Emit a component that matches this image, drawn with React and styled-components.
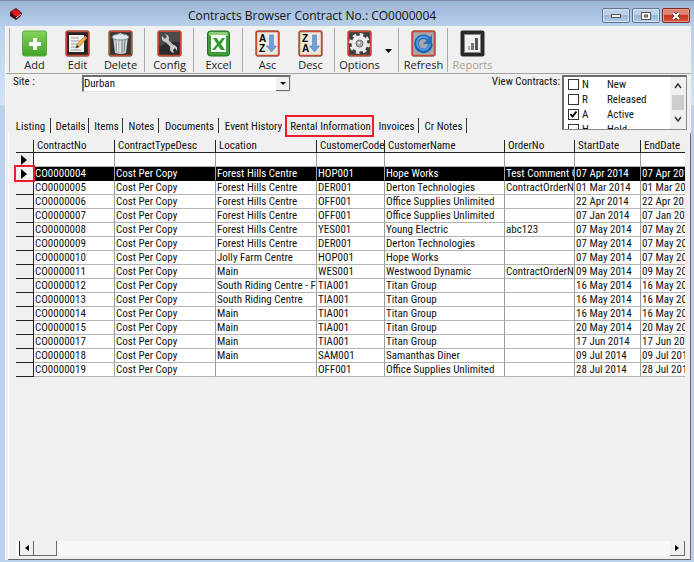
import React from 'react'
import styled, { createGlobalStyle, css } from 'styled-components'

const face = '#f0f0f0'
const uiFont = css`
  font-family: 'Roboto Condensed', 'Liberation Sans Narrow', 'Liberation Sans', sans-serif;
  font-size: 11px;
  line-height: 13px;
`
const captionFont = css`
  font-family: 'Open Sans', 'Noto Sans', sans-serif;
`

const GlobalStyle = createGlobalStyle`
  * {
    box-sizing: border-box;
  }

  body {
    margin: 0;
    color: #111;
    ${uiFont}
  }

  button, input, select {
    font: inherit;
    color: inherit;
    margin: 0;
    padding: 0;
    border: 0;
    background: none;
  }
`

const Window = styled.div`
  min-height: 100vh;
  display: flex;
  flex-direction: column;
  padding: 0 3px 2px 5px;
  background: linear-gradient(#9ab5d3, #bad1ec 26px, #d3e3f4 104px, #b9d1ea 105px);
  border-top: 1px solid #7c8da3;
`

const TitleBar = styled.header`
  height: 25px;
  display: flex;
  align-items: center;
  padding: 0 1px 0 5px;
`

const Title = styled.h1`
  ${captionFont}
  flex: 1;
  margin: 0;
  padding-top: 4px;
  text-align: center;
  font-size: 12px;
  font-weight: 400;
  line-height: 18px;
  white-space: nowrap;
`

const WindowButtons = styled.div`
  display: flex;
  gap: 2px;
  margin-top: 4px;
`

const WindowButton = styled.button`
  width: 28px;
  height: 15px;
  display: flex;
  align-items: center;
  justify-content: center;
  border: 1px solid ${({ $close }) => ($close ? '#7c2a22' : '#5f7590')};
  border-radius: 2px;
  box-shadow: inset 0 0 0 1px ${({ $close }) => ($close ? '#e59a8c' : '#d2e2f4')};
  background: ${({ $close }) => ($close
    ? 'linear-gradient(#dc8273 50%, #c2331f 50%, #d4553f)'
    : 'linear-gradient(#bdd2e9 50%, #98b5d5 50%, #b4cce6)')};
`

const Client = styled.main`
  flex: 1;
  display: flex;
  flex-direction: column;
  background: ${face};
  border-left: 1px solid #fff;
`

const Toolbar = styled.div`
  height: 48px;
  display: flex;
  align-items: center;
  padding-left: 1px;
  border-bottom: 1px solid #a2a2a2;
`

const Separator = styled.span`
  width: 1px;
  height: 44px;
  margin: 0 3px 0 2px;
  background: #a9a9a9;
`

const ToolButton = styled.button`
  ${captionFont}
  width: 43px;
  height: 44px;
  display: flex;
  flex-direction: column;
  align-items: center;
  justify-content: flex-end;
  font-size: 11px;
  line-height: 15px;
  color: ${({ disabled }) => (disabled ? '#a5a294' : '#222')};
  white-space: nowrap;
`

const DropButton = styled.button`
  width: 15px;
  height: 44px;
`

const Filters = styled.section`
  display: flex;
  align-items: stretch;
  height: 59px;
`

const FilterMain = styled.div`
  flex: 1;
  min-width: 0;
  display: flex;
  flex-direction: column;
  justify-content: space-between;
`

const SiteField = styled.label`
  display: flex;
  padding: 1px 0 0 7px;
`

const SiteLabel = styled.span`
  width: 69px;
`

const ComboFrame = styled.span`
  width: 209px;
  height: 17px;
  display: flex;
  background: #fff;
  border: 1px solid #e3e3e3;
  border-top: 2px solid #6d6d6d;
  border-left: 2px solid #6d6d6d;
`

const SiteSelect = styled.select`
  flex: 1;
  appearance: none;
  line-height: 12px;
  background:
    url("data:image/svg+xml,%3Csvg xmlns='http://www.w3.org/2000/svg' width='14' height='14'%3E%3Cpath d='M0 0h14v14H0z' fill='%23f0f0f0'/%3E%3Cpath d='M13.500 0v13.500H0' fill='none' stroke='%23666'/%3E%3Cpath d='M4 5h6L7 8z'/%3E%3C/svg%3E")
    no-repeat right top;
`

const TabStrip = styled.nav`
  display: flex;
  padding-left: 3px;
`

const Tab = styled.button`
  position: relative;
  width: ${({ $width }) => $width}px;
  height: 15px;
  padding: 1px 0 0 2px;
  white-space: nowrap;
  border-right: 1px solid #333;
`

const Highlight = styled.span`
  position: absolute;
  z-index: 1;
  inset: ${({ $inset }) => $inset};
  border: 2px solid #ec1c2c;
  pointer-events: none;
`

const StatusField = styled.div`
  display: flex;
  align-items: flex-start;
  gap: 2px;
  padding: 1px 4px 0 0;
`

const StatusList = styled.div`
  width: 125px;
  height: 55px;
  display: flex;
  background: #fff;
  border: 1px solid #8a8a8a;
  border-top: 2px solid #6d6d6d;
  border-left: 2px solid #6d6d6d;
`

const StatusItems = styled.div`
  flex: 1;
  overflow: hidden;
  padding-left: 4px;
`

const StatusItem = styled.label`
  height: 15px;
  display: flex;
  align-items: center;
`

const StatusCode = styled.span`
  width: 28px;
  padding-left: 3px;
`

const Check = styled.input`
  appearance: none;
  width: 11px;
  height: 11px;
  border: 1px solid #333;

  &:checked {
    background: url("data:image/svg+xml,%3Csvg xmlns='http://www.w3.org/2000/svg' width='9' height='9'%3E%3Cpath d='M1.500 4l2 2.500 4-5' fill='none' stroke='%23000' stroke-width='2'/%3E%3C/svg%3E");
  }
`

const ListScroll = styled.div`
  width: 16px;
  display: flex;
  flex-direction: column;
  align-items: center;
  background: ${face};
`

const ListThumb = styled.span`
  width: 12px;
  height: 15px;
  background: #cdcdcd;
`

const ScrollArrow = styled.button`
  width: 14px;
  height: 18px;
  display: flex;
  align-items: center;
  justify-content: center;
`

const TabPanel = styled.section`
  flex: 1;
  display: flex;
  flex-direction: column;
  margin-left: 2px;
  padding: 7px 5px 3px;
  border: 1px solid #6a6a6a;
  border-width: 0 1px 1px 0;
  box-shadow: inset 1px 0 #fff;
`

const Grid = styled.div`
  flex: 1;
  overflow: hidden;
  padding-left: 3px;
`

const Table = styled.table`
  width: 100%;
  table-layout: fixed;
  border-collapse: separate;
  border-spacing: 0;
`

const HeadCell = styled.th`
  height: 13px;
  padding: 0 0 0 3px;
  text-align: left;
  font-weight: 400;
  line-height: 12px;
  border-right: 1px solid #222;
  border-bottom: 1px solid #222;
  overflow: hidden;
  white-space: nowrap;

  &:last-child {
    border-right: 0;
  }
`

const Cell = styled.td`
  height: 14px;
  padding: 0 0 0 1px;
  line-height: 13px;
  color: ${({ $selected }) => ($selected ? '#fff' : '#111')};
  background: ${({ $selected }) => ($selected ? '#000' : '#fff')};
  border-right: 1px solid #9c9c9c;
  border-bottom: 1px solid ${({ $selected }) => ($selected ? '#000' : '#b4b4b4')};
  overflow: hidden;
  white-space: nowrap;

  &:last-child {
    border-right: 0;
  }
`

const Selector = styled.td`
  position: relative;
  height: 14px;
  padding: 0 0 0 5px;
  line-height: 0;
  background: ${face};
  border-right: 1px solid #222;
  border-bottom: 1px solid #222;
`

const ScrollBar = styled.div`
  height: 15px;
  display: flex;
  margin-left: 3px;
  padding-left: 3px;
  background: #f8f8f8;
`

const ScrollButton = styled.button`
  width: ${({ $wide }) => ($wide ? 23 : 15)}px;
  display: flex;
  align-items: center;
  justify-content: center;
  background: ${face};
  border: 1px solid #6a6a6a;
  border-width: 0 1px 1px 0;

  &:first-child {
    border-left: 1px solid #222;
  }

  &:last-child {
    margin-left: auto;
  }
`

const Icon = ({ children }) => (
  <svg width="25" height="27" viewBox="0 0 25 27" aria-hidden="true">
    {children}
  </svg>
)

const Framed = ({ fill, children }) => (
  <Icon>
    <rect x="0.5" y="0.5" width="24" height="26" rx="2" fill="#5d2a1e" />
    <rect x="1.500" y="1.500" width="22" height="24" rx="1" fill={fill} stroke="#c44a30" strokeWidth="1.400" />
    {children}
  </Icon>
)

const AddIcon = () => (
  <Icon>
    <defs>
      <linearGradient id="addFill" x2="0" y2="1">
        <stop offset="0" stopColor="#86d25b" />
        <stop offset="1" stopColor="#42a32c" />
      </linearGradient>
    </defs>
    <rect x="0.5" y="1" width="24" height="25" rx="2" fill="url(#addFill)" stroke="#58ad3f" />
    <path d="M11 8h4v4h4v4h-4v4h-4v-4H7v-4h4z" fill="#fff" />
  </Icon>
)

const EditIcon = () => (
  <Framed fill="#242424">
    <path d="M4 5h15v17H4z" fill="#f1f1ee" />
    <path d="M6 8h8M6 11h9M6 14h6M6 17h5M6 20h10" stroke="#9c9c9c" />
    <path d="M11 18l1-4 8-8 2 2-8 9z" fill="#efb54d" stroke="#7d5a28" strokeWidth="0.5" />
    <path d="M11 18l1-3 2 2z" fill="#222" />
    <path d="M19 7l1-1 2 2-1 1z" fill="#e07a6b" />
  </Framed>
)

const DeleteIcon = () => (
  <Framed fill="#343434">
    <path d="M5 7h15l-2 16q-5 2-11 0z" fill="#c6ced1" />
    <path d="M8 9l1 13M11 10v13M14 10v13M17 9l-1 13" stroke="#7d898e" />
    <path d="M9 9l1 13M12 10v13" stroke="#f6f9fa" />
    <ellipse cx="12.500" cy="7" rx="8.500" ry="3" fill="#e4eaec" stroke="#7d898d" />
    <path d="M10 5q2-3 5 0" fill="none" stroke="#e8eeee" />
  </Framed>
)

const ConfigIcon = () => (
  <Framed fill="#2b2b2d">
    <path d="M2 2h21v10Q10 11 2 17z" fill="#4a4a4d" />
    <path d="M8 9l9 9" stroke="#bfc3c7" strokeWidth="3.500" />
    <path d="M5 6q-1 5 3 6 4 0 4-4 0-3-4-4l2 3-2 2zM20 21q1-5-3-6-4 0-4 4 0 3 4 4l-1-3 2-2z" fill="#c9cccf" />
  </Framed>
)

const ExcelIcon = () => (
  <Icon>
    <rect x="1.500" y="1" width="22" height="25" rx="3" fill="#3f9a3a" stroke="#1f6e24" />
    <rect x="3" y="2" width="19" height="4" rx="1" fill="#8ccf78" />
    <rect x="5" y="5" width="15" height="17" fill="#f6faf4" />
    <path d="M7 8h4l2 4 3-4h3l-4 6 4 6h-4l-3-4-3 4H6l5-6z" fill="#2f9a30" />
  </Icon>
)

const SortIcon = ({ first, second }) => (
  <Framed fill="#ece8dc">
    <text x="4" y="12" fontFamily="Liberation Sans" fontWeight="700" fontSize="10">{first}</text>
    <text x="4" y="22" fontFamily="Liberation Sans" fontWeight="700" fontSize="10">{second}</text>
    <path d="M14.500 5h4v11h3l-5 6-5-6h3z" fill="#6c9fdc" stroke="#4677ba" strokeWidth="0.500" />
  </Framed>
)

const OptionsIcon = () => (
  <Framed fill="#3d3f40">
    <g fill="none" stroke="#e9ebeb">
      <circle cx="12.500" cy="13.500" r="5.500" strokeWidth="5" />
      <circle cx="12.500" cy="13.500" r="9" strokeWidth="3" strokeDasharray="3.534 3.534" />
    </g>
    <circle cx="12.500" cy="13.500" r="3.500" fill="#a3a8aa" stroke="#6e7376" />
    <circle cx="12" cy="13" r="1.200" fill="#eee" />
  </Framed>
)

const RefreshIcon = () => (
  <Framed fill="#a7a8ad">
    <path d="M18 9.500A7 7 0 1 0 19.500 14" fill="none" stroke="#1d62b2" strokeWidth="4.500" />
    <path d="M17.500 9A6.500 6.500 0 1 0 19 14" fill="none" stroke="#4f9be4" strokeWidth="2" />
    <path d="M21 5v9h-9z" fill="#2770c0" />
  </Framed>
)

const ReportsIcon = () => (
  <Icon>
    <rect x="0.500" y="0.500" width="24" height="26" rx="2" fill="#292929" />
    <rect x="4.500" y="4.500" width="16" height="18" fill="#f2f2f2" stroke="#888" />
    <path d="M8 16h2v4H8z" fill="#aaa" />
    <path d="M11 13h3v7h-3z" fill="#777" />
    <path d="M15 8h3v12h-3z" fill="#555" />
  </Icon>
)

const AppIcon = () => (
  <svg width="12" height="12" viewBox="0 0 12 12" aria-hidden="true">
    <path d="M0 4l6-4 6 5-1 3-5 4-6-4z" fill="#3c1014" />
    <path d="M1 4l5-3 5 4-5 4z" fill="#e5161d" />
    <path d="M6 10l5-4" stroke="#ddd" />
  </svg>
)

const Pointer = () => (
  <svg width="6" height="10" viewBox="0 0 6 10" aria-hidden="true"><path d="M0 0l6 5-6 5z" /></svg>
)

const Chevron = ({ up }) => (
  <svg width="8" height="6" viewBox="0 0 8 6" fill="none" stroke="#333" strokeWidth="1.500" aria-hidden="true">
    <path d={up ? 'M1 5l3-4 3 4' : 'M1 1l3 4 3-4'} />
  </svg>
)

const tabs = [
  ['Listing', 42],
  ['Details', 38],
  ['Items', 34],
  ['Notes', 36],
  ['Documents', 60],
  ['Event History', 68],
  ['Rental Information', 86],
  ['Invoices', 46],
  ['Cr Notes', 48],
]

const statuses = [
  ['N', 'New'],
  ['R', 'Released'],
  ['A', 'Active'],
  ['H', 'Hold'],
]

const columns = [
  ['ContractNo', 81],
  ['ContractTypeDesc', 101],
  ['Location', 101],
  ['CustomerCode', 68],
  ['CustomerName', 120],
  ['OrderNo', 70],
  ['StartDate', 66],
  ['EndDate'],
]

const type = 'Cost Per Copy'
const forest = 'Forest Hills Centre'

const contracts = [
  ['CO0000004', type, forest, 'HOP001', 'Hope Works', 'Test Comment Order', '07 Apr 2014', '07 Apr 2014'],
  ['CO0000005', type, forest, 'DER001', 'Derton Technologies', 'ContractOrderNo', '01 Mar 2014', '01 Mar 2014'],
  ['CO0000006', type, forest, 'OFF001', 'Office Supplies Unlimited', '', '22 Apr 2014', '22 Apr 2014'],
  ['CO0000007', type, forest, 'OFF001', 'Office Supplies Unlimited', '', '07 Jan 2014', '07 Jan 2014'],
  ['CO0000008', type, forest, 'YES001', 'Young Electric', 'abc123', '07 May 2014', '07 May 2014'],
  ['CO0000009', type, forest, 'DER001', 'Derton Technologies', '', '07 May 2014', '07 May 2014'],
  ['CO0000010', type, 'Jolly Farm Centre', 'HOP001', 'Hope Works', '', '07 May 2014', '07 May 2014'],
  ['CO0000011', type, 'Main', 'WES001', 'Westwood Dynamic', 'ContractOrderNo', '09 May 2014', '09 May 2014'],
  ['CO0000012', type, 'South Riding Centre - First', 'TIA001', 'Titan Group', '', '16 May 2014', '16 May 2014'],
  ['CO0000013', type, 'South Riding Centre', 'TIA001', 'Titan Group', '', '16 May 2014', '16 May 2014'],
  ['CO0000014', type, 'Main', 'TIA001', 'Titan Group', '', '16 May 2014', '16 May 2014'],
  ['CO0000015', type, 'Main', 'TIA001', 'Titan Group', '', '20 May 2014', '20 May 2014'],
  ['CO0000017', type, 'Main', 'TIA001', 'Titan Group', '', '17 Jun 2014', '17 Jun 2014'],
  ['CO0000018', type, 'Main', 'SAM001', 'Samanthas Diner', '', '09 Jul 2014', '09 Jul 2014'],
  ['CO0000019', type, '', 'OFF001', 'Office Supplies Unlimited', '', '28 Jul 2014', '28 Jul 2014'],
]

const App = () => (
  <Window>
    <GlobalStyle />
    <TitleBar>
      <AppIcon />
      <Title>Contracts Browser Contract No.: CO0000004</Title>
      <WindowButtons>
        <WindowButton aria-label="Minimize">
          <svg width="10" height="4"><rect x="0.5" y="0.5" width="9" height="3" fill="#fff" stroke="#555" /></svg>
        </WindowButton>
        <WindowButton aria-label="Maximize">
          <svg width="10" height="8">
            <rect x="0.5" y="0.5" width="9" height="7" fill="#fff" stroke="#555" />
            <rect x="3.500" y="3" width="3" height="2" fill="#9ab5d3" stroke="#555" />
          </svg>
        </WindowButton>
        <WindowButton $close aria-label="Close">
          <svg width="10" height="8">
            <path d="M2 1l6 6M8 1L2 7" stroke="#5b2a2a" strokeWidth="3.500" />
            <path d="M2 1l6 6M8 1L2 7" stroke="#fff" strokeWidth="2" />
          </svg>
        </WindowButton>
      </WindowButtons>
    </TitleBar>

    <Client>
      <Toolbar>
        <Separator />
        <ToolButton><AddIcon />Add</ToolButton>
        <ToolButton><EditIcon />Edit</ToolButton>
        <ToolButton><DeleteIcon />Delete</ToolButton>
        <Separator />
        <ToolButton><ConfigIcon />Config</ToolButton>
        <Separator />
        <ToolButton><ExcelIcon />Excel</ToolButton>
        <Separator />
        <ToolButton><SortIcon first="A" second="Z" />Asc</ToolButton>
        <ToolButton><SortIcon first="Z" second="A" />Desc</ToolButton>
        <Separator />
        <ToolButton><OptionsIcon />Options</ToolButton>
        <DropButton aria-label="More options">
          <svg width="7" height="4"><path d="M0 0h7L3.500 4z" /></svg>
        </DropButton>
        <Separator />
        <ToolButton><RefreshIcon />Refresh</ToolButton>
        <Separator />
        <ToolButton disabled><ReportsIcon />Reports</ToolButton>
      </Toolbar>

      <Filters>
        <FilterMain>
          <SiteField>
            <SiteLabel>Site :</SiteLabel>
            <ComboFrame>
              <SiteSelect defaultValue="Durban">
                <option>Durban</option>
              </SiteSelect>
            </ComboFrame>
          </SiteField>
          <TabStrip>
            {tabs.map(([name, width]) => (
              <Tab key={name} $width={width}>
                {name}
                {name === 'Rental Information' && <Highlight $inset="-3px -2px -4px -2px" />}
              </Tab>
            ))}
          </TabStrip>
        </FilterMain>
        <StatusField>
          <span id="statusLabel">View Contracts:</span>
          <StatusList role="group" aria-labelledby="statusLabel">
            <StatusItems>
              {statuses.map(([code, name]) => (
                <StatusItem key={code}>
                  <Check type="checkbox" defaultChecked={code === 'A'} />
                  <StatusCode>{code}</StatusCode>
                  {name}
                </StatusItem>
              ))}
            </StatusItems>
            <ListScroll>
              <ScrollArrow aria-label="Scroll up"><Chevron up /></ScrollArrow>
              <ListThumb />
              <ScrollArrow aria-label="Scroll down"><Chevron /></ScrollArrow>
            </ListScroll>
          </StatusList>
        </StatusField>
      </Filters>

      <TabPanel>
        <Grid>
          <Table>
            <colgroup>
              <col width="18" />
              {columns.map(([name, width]) => <col key={name} width={width} />)}
            </colgroup>
            <thead>
              <tr>
                <HeadCell aria-label="Current row" />
                {columns.map(([name]) => <HeadCell key={name} scope="col">{name}</HeadCell>)}
              </tr>
            </thead>
            <tbody>
              <tr>
                <Selector><Pointer /></Selector>
                {columns.map(([name]) => <Cell key={name} />)}
              </tr>
              {contracts.map((row, index) => (
                <tr key={row[0]}>
                  <Selector>
                    {index === 0 && <Pointer />}
                    {index === 0 && <Highlight $inset="-2px" />}
                  </Selector>
                  {row.map((value, i) => (
                    <Cell key={columns[i][0]} $selected={index === 0}>{value}</Cell>
                  ))}
                </tr>
              ))}
            </tbody>
          </Table>
        </Grid>
        <ScrollBar>
          <ScrollButton aria-label="Scroll left">
            <svg width="4" height="6"><path d="M4 0v6L0 3z" /></svg>
          </ScrollButton>
          <ScrollButton $wide aria-label="Scroll thumb" />
          <ScrollButton aria-label="Scroll right">
            <svg width="4" height="6"><path d="M0 0v6l4-3z" /></svg>
          </ScrollButton>
        </ScrollBar>
      </TabPanel>
    </Client>
  </Window>
)

export default App
